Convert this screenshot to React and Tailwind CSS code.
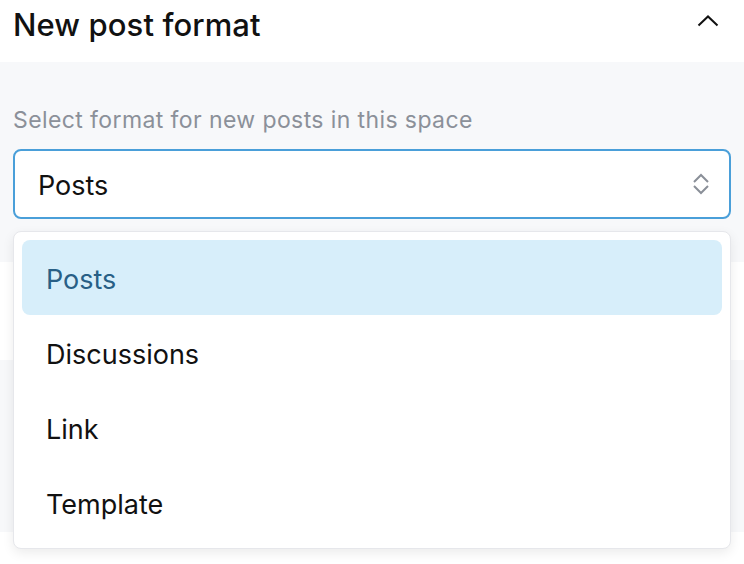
import React from "react";

export default function App() {
  const items = ["Posts", "Discussions", "Link", "Template"];
  return (
    <div className="w-[744px] h-[564px] overflow-hidden bg-white font-['Inter',sans-serif] text-[#111]">
      <header className="h-[62px] flex items-start justify-between pl-[13px] pr-[25px]">
        <h1 className="text-[31px] font-medium leading-none mt-[9px] tracking-[0.1px]">New post format</h1>
        <svg className="mt-[15px]" width="22" height="12" viewBox="0 0 22 12" fill="none">
          <path d="M1.5 10.5 L11 1.5 L20.5 10.5" stroke="#111" strokeWidth="2" />
        </svg>
      </header>
      <section className="bg-[#f7f8fa] h-[200px] px-[13px] pt-[44px]">
        <p className="text-[23px] leading-[28px] tracking-[0.4px] text-[#8b9099]">Select format for new posts in this space</p>
        <div className="relative mt-[15px]">
          <div className="h-[70px] w-full border-2 border-[#4a9fd9] rounded-[8px] bg-white flex items-center justify-between pl-[23px] pr-[19px]">
            <span className="text-[27px] leading-none pt-[2px]">Posts</span>
            <svg width="18" height="22" viewBox="0 0 18 22" fill="none">
              <path d="M2 9 L9 2 L16 9" stroke="#8a8f98" strokeWidth="2" />
              <path d="M2 13 L9 20 L16 13" stroke="#8a8f98" strokeWidth="2" />
            </svg>
          </div>
          <div className="absolute left-0 right-0 top-[82px] z-10 bg-white border border-[#e6e7eb] rounded-[8px] p-[8px] shadow-[0_4px_12px_rgba(0,0,0,0.08)]">
            {items.map((it, i) => (
              <div
                key={it}
                className={
                  i === 0
                    ? "h-[75px] flex items-center pl-[24px] pt-[3px] rounded-[8px] bg-[#d7eefa] text-[#285f86] text-[27px] leading-none"
                    : "h-[75px] flex items-center pl-[24px] pt-[3px] text-[27px] leading-none"
                }
              >
                {it}
              </div>
            ))}
          </div>
        </div>
      </section>
      <div className="h-[98px] bg-white" />
      <div className="h-[172px] bg-[#f7f8fa]" />
      <div className="h-[40px] bg-white" />
    </div>
  );
}
